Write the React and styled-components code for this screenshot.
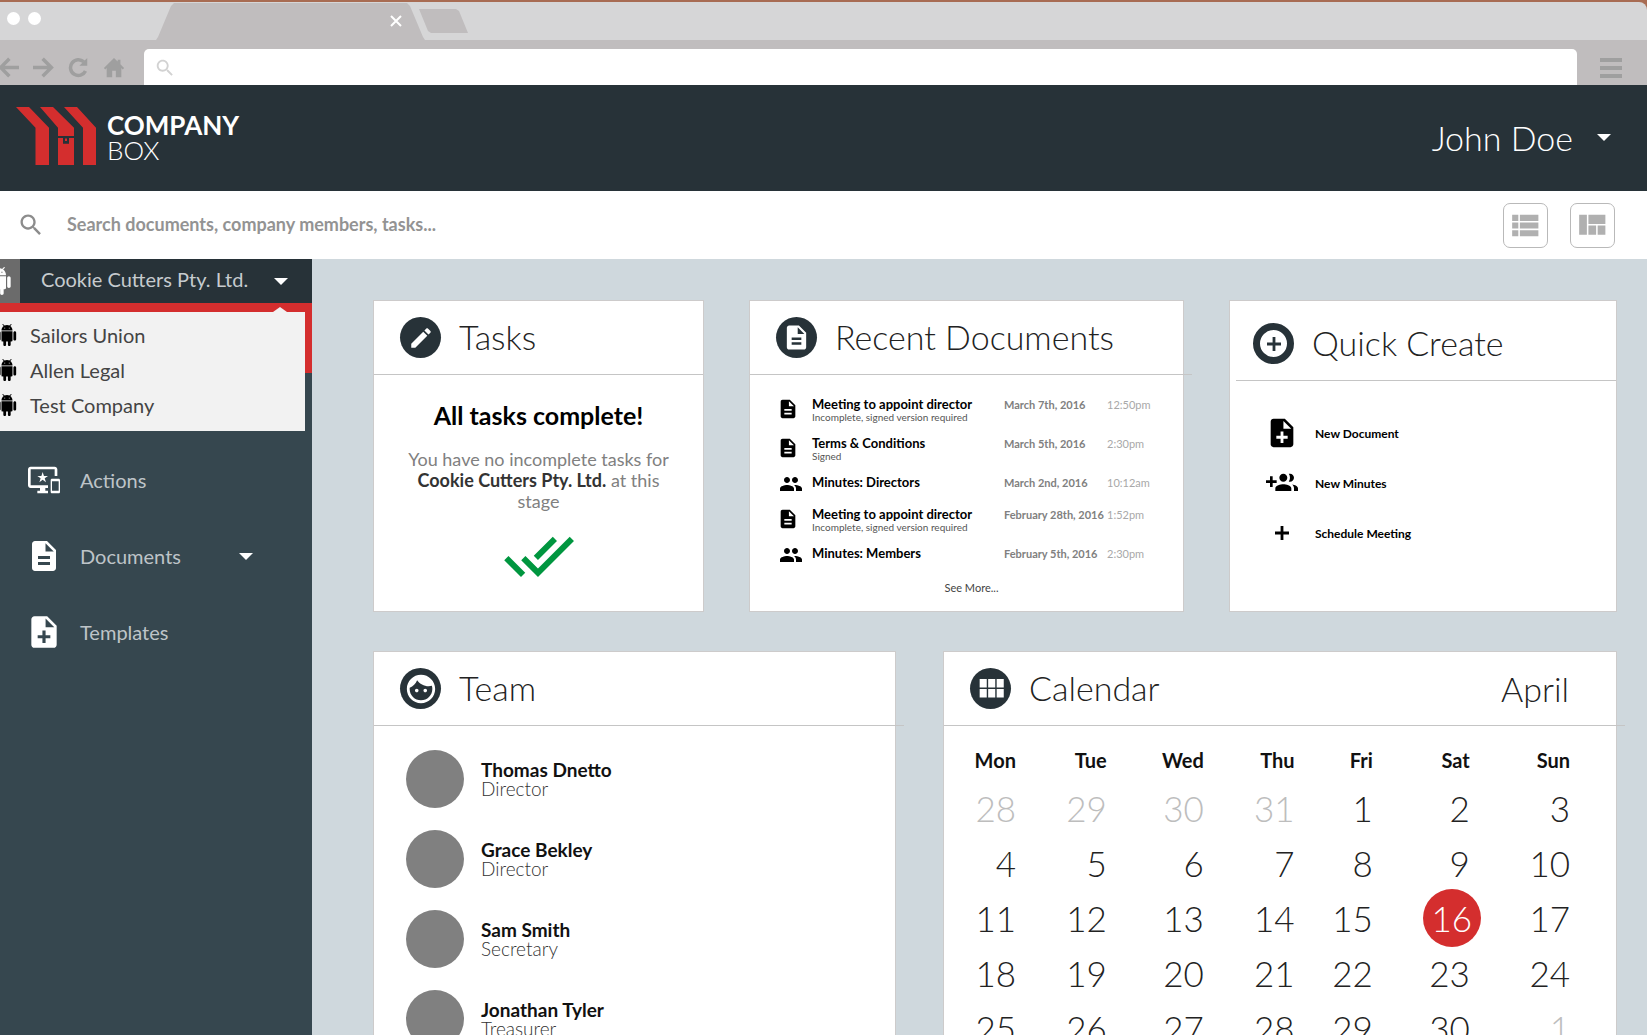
import React from "react";
import styled, { createGlobalStyle, css } from "styled-components";

const GlobalStyle = createGlobalStyle`
  *, *::before, *::after { box-sizing: border-box; }
  html, body { margin: 0; padding: 0; }
  body {
    font-family: Lato, "Liberation Sans", sans-serif;
    background: #a86c53;
    color: #222;
  }
  button, input { font-family: inherit; }
  h1, h2, h3, p, ul { margin: 0; padding: 0; }
  ul { list-style: none; }
`;

/* ---------- icons ---------- */

const paths = {
  search: "M15.5 14h-.79l-.28-.27C15.41 12.59 16 11.11 16 9.5 16 5.91 13.09 3 9.5 3S3 5.91 3 9.5 5.91 16 9.5 16c1.61 0 3.09-.59 4.23-1.57l.27.28v.79l5 4.99L20.49 19l-4.99-5zm-6 0C7.01 14 5 11.99 5 9.5S7.01 5 9.5 5 14 7.01 14 9.5 11.99 14 9.5 14z",
  list: "M4 14h4v-4H4v4zm0 5h4v-4H4v4zM4 9h4V5H4v4zm5 5h12v-4H9v4zm0 5h12v-4H9v4zM9 5v4h12V5H9z",
  quilt: "M10 18h5v-6h-5v6zm-6 0h5V5H4v13zm12 0h5v-6h-5v6zM10 5v6h11V5H10z",
  android: "M6 18c0 .55.45 1 1 1h1v3.5c0 .83.67 1.5 1.5 1.5s1.5-.67 1.5-1.5V19h2v3.5c0 .83.67 1.5 1.5 1.5s1.5-.67 1.5-1.5V19h1c.55 0 1-.45 1-1V8H6v10zM3.5 8C2.67 8 2 8.67 2 9.5v7c0 .83.67 1.5 1.5 1.5S5 17.33 5 16.5v-7C5 8.67 4.33 8 3.5 8zm17 0c-.83 0-1.5.67-1.5 1.5v7c0 .83.67 1.5 1.5 1.5s1.5-.67 1.5-1.5v-7c0-.83-.67-1.5-1.5-1.5zm-4.97-5.84l1.3-1.3c.2-.2.2-.51 0-.71-.2-.2-.51-.2-.71 0l-1.48 1.48C13.85 1.23 12.95 1 12 1c-.96 0-1.86.23-2.66.63L7.85.15c-.2-.2-.51-.2-.71 0-.2.2-.2.51 0 .71l1.31 1.31C6.97 3.26 6 5.01 6 7h12c0-1.99-.97-3.75-2.47-4.84zM10 5H9V4h1v1zm5 0h-1V4h1v1z",
  devices: "M23 11.01L18 11c-.55 0-1 .45-1 1v9c0 .55.45 1 1 1h5c.55 0 1-.45 1-1v-9c0-.55-.45-.99-1-.99zM23 20h-5v-7h5v7zM20 2H2C.89 2 0 2.89 0 4v12c0 1.1.89 2 2 2h7v2H7v2h8v-2h-2v-2h2v-2H2V4h18v5h2V4c0-1.11-.9-2-2-2zm-8.03 7L11 6l-.97 3H7l2.47 1.76-.94 2.91 2.47-1.8 2.47 1.8-.94-2.91L15 9h-3.03z",
  doc: "M14 2H6c-1.1 0-1.99.9-1.99 2L4 20c0 1.1.89 2 1.99 2H18c1.1 0 2-.9 2-2V8l-6-6zm2 16H8v-2h8v2zm0-4H8v-2h8v2zm-3-5V3.5L18.5 9H13z",
  docAdd: "M14 2H6c-1.1 0-1.99.9-1.99 2L4 20c0 1.1.89 2 1.99 2H18c1.1 0 2-.9 2-2V8l-6-6zm2 14h-3v3h-2v-3H8v-2h3v-3h2v3h3v2zm-3-7V3.5L18.5 9H13z",
  people: "M16 11c1.66 0 2.99-1.34 2.99-3S17.66 5 16 5c-1.66 0-3 1.34-3 3s1.34 3 3 3zm-8 0c1.66 0 2.99-1.34 2.99-3S9.66 5 8 5C6.34 5 5 6.34 5 8s1.34 3 3 3zm0 2c-2.33 0-7 1.17-7 3.5V19h14v-2.5c0-2.33-4.67-3.5-7-3.5zm8 0c-.29 0-.62.02-.97.05 1.16.84 1.97 1.97 1.97 3.45V19h6v-2.5c0-2.33-4.67-3.5-7-3.5z",
  groupAdd: "M8 10H5V7H3v3H0v2h3v3h2v-3h3v-2zm10 1c1.66 0 2.99-1.34 2.99-3S19.66 5 18 5c-.32 0-.63.05-.91.14.57.81.9 1.79.9 2.86s-.34 2.04-.9 2.86c.28.09.59.14.91.14zm-5 0c1.66 0 2.99-1.34 2.99-3S14.66 5 13 5c-1.66 0-3 1.34-3 3s1.34 3 3 3zm6.62 2.16c.83.73 1.38 1.66 1.38 2.84v2h3v-2c0-1.54-2.37-2.49-4.38-2.84zM13 13c-2 0-6 1-6 3v2h12v-2c0-2-4-3-6-3z",
  plus: "M19 13.400h-5.600V19h-2.800v-5.600H5v-2.800h5.600V5h2.800v5.600H19z",
  doneAll: "M18 7l-1.41-1.41-6.34 6.34 1.41 1.41L18 7zm4.24-1.41L11.66 16.17 7.48 12l-1.41 1.41L11.66 19l12-12-1.42-1.41zM.41 13.41L6 19l1.41-1.41L1.83 12 .41 13.41z",
  pencil: "M3 17.25V21h3.75L17.81 9.94l-3.75-3.75L3 17.25zM20.71 7.04c.39-.39.39-1.02 0-1.41l-2.34-2.34c-.39-.39-1.02-.39-1.41 0l-1.83 1.83 3.75 3.75 1.83-1.83z",
  face: "M9 11.75c-.69 0-1.25.56-1.25 1.25s.56 1.25 1.25 1.25 1.25-.56 1.25-1.25-.56-1.25-1.25-1.25zm6 0c-.69 0-1.25.56-1.25 1.25s.56 1.25 1.25 1.25 1.25-.56 1.25-1.25-.56-1.25-1.25-1.25zM12 2C6.48 2 2 6.48 2 12s4.48 10 10 10 10-4.48 10-10S17.52 2 12 2zm0 18c-4.41 0-8-3.59-8-8 0-.29.02-.58.05-.86 2.36-1.05 4.23-2.98 5.21-5.37C11.07 8.33 14.05 10 17.42 10c.78 0 1.53-.09 2.25-.26.21.71.33 1.47.33 2.26 0 4.41-3.59 8-8 8z",
  grid: "M4 11h5V5H4v6zm0 7h5v-6H4v6zm6 0h5v-6h-5v6zm6 0h5v-6h-5v6zm-6-7h5V5h-5v6zm6-6v6h5V5h-5z",
  menu: "M1 3h22v4H1zM1 11h22v4H1zM1 19h22v4H1z",
  home: "M12 1L1 12l1.500 1.500L4 12v10h6v-7h4v7h6V12l1.500 1.500L23 12l-4-4V3h-3v2z",
};

const Svg = styled.svg`
  display: block;
  flex: none;
  fill: currentColor;
`;

const Icon = ({ name, size }) => (
  <Svg width={size} height={size} viewBox="0 0 24 24" aria-hidden="true">
    <path d={paths[name]} />
  </Svg>
);

/* the face of the Team badge is dark, cut out of a light disc */
const FaceIcon = ({ size }) => (
  <Svg width={size} height={size} viewBox="0 0 24 24" aria-hidden="true">
    <path d={paths.face} />
  </Svg>
);

const StrokeSvg = styled(Svg)`
  fill: none;
  stroke: currentColor;
  stroke-width: 4;
`;

const Caret = styled.span`
  flex: none;
  border: 7px solid transparent;
  border-top-color: #fff;
  border-bottom-width: 0;
`;

/* ---------- browser window ---------- */

const Window = styled.div`
  display: flex;
  flex-direction: column;
  height: 100vh;
  overflow: hidden;
  border-top: 2px solid #a86c53;
`;

const TabStrip = styled.div`
  flex: none;
  display: flex;
  align-items: flex-end;
  height: 38px;
  background: #d6d6d7;
  border-top-right-radius: 8px;
`;

const WindowDots = styled.div`
  display: flex;
  align-self: center;
  gap: 8px;
  width: 156px;
  padding: 0 0 6px 7px;
`;

const Dot = styled.span`
  width: 13px;
  height: 13px;
  border-radius: 50%;
  background: #fff;
`;

const Tab = styled.div`
  display: flex;
  align-items: center;
  justify-content: flex-end;
  width: 269px;
  height: 37px;
  padding: 0 23px 2px 0;
  background: #c0bdbe;
  clip-path: polygon(18px 0, calc(100% - 18px) 0, calc(100% - 15px) 3px, calc(100% - 2px) 34px, 100% 100%, 0 100%, 2px 34px, 15px 3px);
`;

const PlainButton = styled.button`
  display: flex;
  align-items: center;
  margin: 0;
  padding: 0;
  border: 0;
  background: none;
  color: inherit;
  font-size: inherit;
  cursor: pointer;
`;

const CloseButton = styled(PlainButton)`
  color: #fff;
`;

const NewTab = styled(PlainButton)`
  align-self: center;
  width: 49px;
  height: 24px;
  margin-left: -6px;
  background: #c0bdbe;
  clip-path: polygon(0 0, 37px 0, 40px 2px, 100% 100%, 12px 100%, 9px 22px);
`;

const Toolbar = styled.div`
  flex: none;
  display: flex;
  align-items: flex-end;
  height: 45px;
  padding-right: 24px;
  background: #c0bdbe;
  color: #9f9f9f;
`;

const ToolButtons = styled.div`
  display: flex;
  align-self: center;
  gap: 14px;
  width: 144px;
  padding-top: 10px;
  margin-left: -2px;
`;

const AddressBar = styled.label`
  flex: 1;
  display: flex;
  align-items: center;
  gap: 8px;
  height: 36px;
  padding: 2px 12px 0 10px;
  margin: 0 22px 0 2px;
  border-radius: 5px 5px 0 0;
  background: #fff;
  color: #d2d2d2;
`;

const TextInput = styled.input`
  flex: 1;
  min-width: 0;
  padding: 0 0 2px;
  border: 0;
  outline: 0;
  background: transparent;
  color: #444;
  font-size: 18px;
  &::placeholder { color: #939393; opacity: 1; font-weight: 700; }
`;

const MenuButton = styled(PlainButton)`
  padding-bottom: 6px;
`;

/* ---------- header ---------- */

const Header = styled.header`
  flex: none;
  display: flex;
  align-items: center;
  justify-content: space-between;
  height: 106px;
  padding: 0 36px 4px 16px;
  background: #273238;
  color: #fff;
`;

const Brand = styled.a`
  display: flex;
  align-items: center;
  gap: 11px;
  color: #fff;
  text-decoration: none;
  font-size: 26px;
  line-height: 25px;
`;

const BrandName = styled.span`
  display: flex;
  flex-direction: column;
  padding-top: 3px;
  strong { font-weight: 700; }
  span { font-weight: 300; }
`;

const UserButton = styled(PlainButton)`
  gap: 24px;
  padding-top: 2px;
  font-size: 34px;
  font-weight: 300;
  color: #fff;
`;

const SearchBar = styled.div`
  flex: none;
  display: flex;
  align-items: center;
  gap: 22px;
  height: 68px;
  padding: 0 32px 0 17px;
  background: #fff;
`;

const SearchField = styled.label`
  flex: 1;
  display: flex;
  align-items: center;
  gap: 22px;
  color: #8c8c8c;
`;

const ViewButton = styled.button`
  display: flex;
  align-items: center;
  justify-content: center;
  width: 45px;
  height: 45px;
  padding: 0 2px 0 0;
  border: 1px solid #b9b9b9;
  border-radius: 7px;
  background: #fff;
  color: #b0b0b0;
`;

/* ---------- sidebar ---------- */

const Body = styled.div`
  flex: 1;
  display: flex;
  min-height: 0;
`;

const Sidebar = styled.aside`
  flex: none;
  width: 312px;
  background: #36474f;
`;

const CompanyPicker = styled.div`
  position: relative;
`;

const CompanyButton = styled(PlainButton)`
  width: 100%;
  height: 44px;
  padding-right: 24px;
  background: #273238;
  color: #c6cbce;
  font-size: 20px;
`;

const CompanyName = styled.span`
  flex: 1;
  padding-bottom: 4px;
  text-align: left;
`;

const CompanyBadge = styled.span`
  display: flex;
  align-items: center;
  justify-content: flex-end;
  width: 20px;
  height: 44px;
  margin-right: 21px;
  padding-right: 7px;
  overflow: hidden;
  background: #6b6b6b;
  color: #fff;
`;

const CompanyMenu = styled.ul`
  position: absolute;
  z-index: 1;
  top: 53px;
  left: 0;
  right: 7px;
  padding: 5px 0 9px;
  background: #f2f2f2;
  &::before {
    content: "";
    position: absolute;
    right: 18px;
    bottom: 100%;
    border: 7px solid transparent;
    border-top-width: 0;
    border-bottom: 5px solid #f2f2f2;
  }
`;

const CompanyOption = styled(PlainButton)`
  gap: 12px;
  width: 100%;
  height: 35px;
  margin-left: -4px;
  color: #000;
  font-size: 20px;
  span { color: #444; }
`;

const ActiveSlot = styled.div`
  height: 70px;
  margin-bottom: 69px;
  background: #d42e2e;
`;

const NavLink = styled.a`
  display: flex;
  align-items: center;
  gap: 18px;
  height: 76px;
  padding: 0 59px 0 26px;
  color: #fff;
  text-decoration: none;
  font-size: 20px;
`;

const NavIcon = styled.span`
  display: flex;
  justify-content: center;
  width: 36px;
`;

const NavText = styled.span`
  flex: 1;
  color: #bec4c8;
`;

/* ---------- dashboard ---------- */

const Main = styled.main`
  flex: 1;
  min-width: 0;
  display: flex;
  flex-direction: column;
  gap: 39px;
  padding: 41px 30px 0 61px;
  background: #cfd8dd;
`;

const CardRow = styled.div`
  flex: none;
  display: grid;
  grid-template-columns: ${(p) => p.$columns};
  gap: ${(p) => p.$gap}px;
`;

const Card = styled.section`
  min-width: 0;
  min-height: 312px;
  background: #fff;
  border: 1px solid #cdcbcb;
`;

const CardHeader = styled.div`
  display: flex;
  align-items: center;
  gap: 18px;
  height: ${(p) => (p.$tall ? 79 : 73)}px;
  padding: ${(p) => (p.$tall ? "6px 47px 0 23px" : "0 47px 0 26px")};
`;

const CardTitle = styled.h2`
  flex: 1;
  padding-bottom: 2px;
  font-size: 34px;
  font-weight: 300;
  line-height: 40px;
  white-space: nowrap;
`;

const Month = styled.span`
  font-size: 34px;
  font-weight: 300;
`;

const Disc = styled.span`
  flex: none;
  display: flex;
  align-items: center;
  justify-content: center;
  width: 41px;
  height: 41px;
  border-radius: 50%;
  background: ${(p) => (p.$ring ? "#fff" : "#273238")};
  border: ${(p) => (p.$ring ? "7px solid #273238" : "0")};
  color: ${(p) => (p.$ring ? "#273238" : "#fff")};
`;

const Divider = styled.hr`
  position: relative;
  height: 1px;
  margin: 0 ${(p) => (p.$overhang ? -9 : 0)}px 0 ${(p) => (p.$inset ? 6 : 0)}px;
  border: 0;
  background: #c5c5c5;
`;

const TasksBody = styled.div`
  display: flex;
  flex-direction: column;
  align-items: center;
  padding: 25px 24px 0;
  text-align: center;
`;

const TasksHeading = styled.h3`
  font-size: 25px;
  line-height: 30px;
  color: #000;
`;

const TasksText = styled.p`
  margin: 19px 0 8px;
  font-size: 18px;
  line-height: 21px;
  color: #808080;
  strong { color: #333; }
`;

const Success = styled.span`
  color: #00963f;
`;

const DocTable = styled.table`
  width: 100%;
  margin-top: 22px;
  border-collapse: collapse;
  table-layout: fixed;
  td { padding: 0; vertical-align: top; white-space: nowrap; }
`;

const DocRow = styled.tr`
  height: ${(p) => (p.$short ? 32 : 39)}px;
`;

const IconCell = styled.td`
  width: 62px;
  color: #000;
  ${Svg} { margin: ${(p) => (p.$wide ? "-3px 0 0 29px" : "1px 0 0 27px")}; }
`;

const DocTitle = styled.div`
  font-size: 13px;
  line-height: 15px;
  font-weight: 700;
  color: #000;
`;

const DocNote = styled.div`
  font-size: 10px;
  line-height: 11px;
  color: #555;
`;

const DateCell = styled.td`
  width: 103px;
  font-size: 11px;
  line-height: 15px;
  font-weight: 700;
  color: #808080;
`;

const TimeCell = styled.td`
  width: 76px;
  font-size: 11px;
  line-height: 15px;
  color: #a8a8a8;
`;

const SeeMore = styled.a`
  display: block;
  margin-top: 3px;
  padding-left: 10px;
  text-align: center;
  font-size: 11px;
  line-height: 14px;
  color: #444;
  text-decoration: none;
`;

const QuickList = styled.ul`
  padding: 27px 0 0 35px;
`;

const QuickButton = styled(PlainButton)`
  gap: 16px;
  height: 50px;
  font-size: 12px;
  font-weight: 700;
  color: #000;
`;

const QuickIcon = styled.span`
  display: flex;
  justify-content: center;
  width: 34px;
`;

const TeamList = styled.ul`
  padding: 13px 0 16px 32px;
`;

const Member = styled.li`
  display: flex;
  align-items: center;
  gap: 17px;
  height: 80px;
`;

const Avatar = styled.span`
  width: 58px;
  height: 58px;
  border-radius: 50%;
  background: #808080;
`;

const MemberText = styled.div`
  display: flex;
  flex-direction: column;
  font-size: 19px;
  line-height: 19px;
  strong { color: #111; }
  span { color: #333; font-weight: 300; }
`;

const CalendarTable = styled.table`
  width: calc(100% - 46px);
  margin-top: 14px;
  border-collapse: collapse;
  table-layout: fixed;
  th, td { padding: 0; text-align: right; }
  th { height: 40px; font-size: 20px; color: #111; }
  td { height: 55px; font-size: 35px; line-height: 40px; font-weight: 300; }
`;

const Col = styled.col`
  width: ${(p) => p.$share}%;
`;

const Day = styled.span`
  ${(p) => p.$muted && css`color: #bdbdbd;`}
  ${(p) => p.$today && css`
    display: inline-flex;
    align-items: center;
    justify-content: center;
    width: 58px;
    height: 58px;
    margin: -9px -11px -9px 0;
    border-radius: 50%;
    background: #d42e2e;
    color: #fff;
  `}
`;

const companies = ["Sailors Union", "Allen Legal", "Test Company"];

const documents = [
  { icon: "doc", title: "Meeting to appoint director", note: "Incomplete, signed version required", date: "March 7th, 2016", time: "12:50pm" },
  { icon: "doc", title: "Terms & Conditions", note: "Signed", date: "March 5th, 2016", time: "2:30pm" },
  { icon: "people", title: "Minutes: Directors", date: "March 2nd, 2016", time: "10:12am" },
  { icon: "doc", title: "Meeting to appoint director", note: "Incomplete, signed version required", date: "February 28th, 2016", time: "1:52pm" },
  { icon: "people", title: "Minutes: Members", date: "February 5th, 2016", time: "2:30pm" },
];

const quickActions = [
  { icon: "docAdd", size: 34, label: "New Document" },
  { icon: "groupAdd", size: 32, label: "New Minutes" },
  { icon: "plus", size: 24, label: "Schedule Meeting" },
];

const team = [
  ["Thomas Dnetto", "Director"],
  ["Grace Bekley", "Director"],
  ["Sam Smith", "Secretary"],
  ["Jonathan Tyler", "Treasurer"],
];

const weekdays = ["Mon", "Tue", "Wed", "Thu", "Fri", "Sat", "Sun"];
const columnShares = [11.5, 14.5, 15.5, 14.5, 12.5, 15.5, 16];
const TODAY = 16;
const weeks = [
  [28, 29, 30, 31, 1, 2, 3],
  [4, 5, 6, 7, 8, 9, 10],
  [11, 12, 13, 14, 15, 16, 17],
  [18, 19, 20, 21, 22, 23, 24],
  [25, 26, 27, 28, 29, 30, 1],
];
const isOutside = (week, day) =>
  (week === 0 && day > 7) || (week === weeks.length - 1 && day < 7);

const Logo = () => (
  <Svg width="80" height="58" viewBox="0 0 80 58" aria-hidden="true" color="#d42e2e">
    <path d="M0 0H13L33 20.700V58H19.500V20.700Z" />
    <path d="M24 0H37L58 20.700V29H42V20.700Z" />
    <path d="M42 31H47V36.700H53V31H58V58H42Z" />
    <path d="M49 31.500H51V34H49Z" />
    <path d="M48 0H61L80 20.700V58H67V20.700Z" />
  </Svg>
);

function BrowserChrome() {
  return (
    <>
      <TabStrip>
        <WindowDots><Dot /><Dot /></WindowDots>
        <Tab>
          <CloseButton aria-label="Close tab">
            <StrokeSvg width="12" height="12" viewBox="0 0 24 24"><path d="M2 2L22 22M22 2L2 22" /></StrokeSvg>
          </CloseButton>
        </Tab>
        <NewTab aria-label="New tab" />
      </TabStrip>
      <Toolbar>
        <ToolButtons>
          <PlainButton aria-label="Back">
            <StrokeSvg width="21" height="21" viewBox="0 0 24 24"><path d="M24 12H4M13 2L3 12L13 22" /></StrokeSvg>
          </PlainButton>
          <PlainButton aria-label="Forward">
            <StrokeSvg width="21" height="21" viewBox="0 0 24 24"><path d="M0 12H20M11 2L21 12L11 22" /></StrokeSvg>
          </PlainButton>
          <PlainButton aria-label="Reload">
            <StrokeSvg width="21" height="21" viewBox="0 0 24 24">
              <path d="M20 16A9 9 0 1 1 18 5.500" />
              <path d="M22 1V10H13Z" fill="currentColor" stroke="none" />
            </StrokeSvg>
          </PlainButton>
          <PlainButton aria-label="Home"><Icon name="home" size={22} /></PlainButton>
        </ToolButtons>
        <AddressBar>
          <Icon name="search" size={22} />
          <TextInput type="text" aria-label="Address" />
        </AddressBar>
        <MenuButton aria-label="Menu"><Icon name="menu" size={24} /></MenuButton>
      </Toolbar>
    </>
  );
}

function CompanySwitcher() {
  return (
    <CompanyPicker>
      <CompanyButton aria-expanded="true">
        <CompanyBadge><Icon name="android" size={28} /></CompanyBadge>
        <CompanyName>Cookie Cutters Pty. Ltd.</CompanyName>
        <Caret />
      </CompanyButton>
      <CompanyMenu>
        {companies.map((name) => (
          <li key={name}>
            <CompanyOption><Icon name="android" size={22} /><span>{name}</span></CompanyOption>
          </li>
        ))}
      </CompanyMenu>
    </CompanyPicker>
  );
}

function RecentDocuments() {
  return (
    <Card>
      <CardHeader>
        <Disc><Icon name="doc" size={29} /></Disc>
        <CardTitle>Recent Documents</CardTitle>
      </CardHeader>
      <Divider $overhang />
      <DocTable>
        <tbody>
          {documents.map((d, i) => (
            <DocRow key={i} $short={!d.note}>
              <IconCell $wide={d.icon === "people"}><Icon name={d.icon} size={d.icon === "doc" ? 22 : 24} /></IconCell>
              <td>
                <DocTitle>{d.title}</DocTitle>
                {d.note && <DocNote>{d.note}</DocNote>}
              </td>
              <DateCell>{d.date}</DateCell>
              <TimeCell>{d.time}</TimeCell>
            </DocRow>
          ))}
        </tbody>
      </DocTable>
      <SeeMore href="#documents">See More...</SeeMore>
    </Card>
  );
}

function Calendar() {
  return (
    <Card>
      <CardHeader>
        <Disc><Icon name="grid" size={34} /></Disc>
        <CardTitle>Calendar</CardTitle>
        <Month>April</Month>
      </CardHeader>
      <Divider $overhang />
      <CalendarTable>
        <colgroup>{columnShares.map((s, i) => <Col key={i} $share={s} />)}</colgroup>
        <thead><tr>{weekdays.map((d) => <th key={d} scope="col">{d}</th>)}</tr></thead>
        <tbody>
          {weeks.map((week, w) => (
            <tr key={w}>
              {week.map((day) => (
                <td key={day}><Day $muted={isOutside(w, day)} $today={day === TODAY}>{day}</Day></td>
              ))}
            </tr>
          ))}
        </tbody>
      </CalendarTable>
    </Card>
  );
}

export default function App() {
  return (
    <>
      <GlobalStyle />
      <Window>
        <BrowserChrome />
        <Header>
          <Brand href="#home">
            <Logo />
            <BrandName><strong>COMPANY</strong><span>BOX</span></BrandName>
          </Brand>
          <UserButton>John Doe<Caret /></UserButton>
        </Header>
        <SearchBar>
          <SearchField>
            <Icon name="search" size={28} />
            <TextInput type="search" aria-label="Search" placeholder="Search documents, company members, tasks..." />
          </SearchField>
          <ViewButton aria-label="List view"><Icon name="list" size={37} /></ViewButton>
          <ViewButton aria-label="Tile view"><Icon name="quilt" size={37} /></ViewButton>
        </SearchBar>
        <Body>
          <Sidebar>
            <CompanySwitcher />
            <ActiveSlot />
            <nav>
              <NavLink href="#actions"><NavIcon><Icon name="devices" size={32} /></NavIcon><NavText>Actions</NavText></NavLink>
              <NavLink href="#documents"><NavIcon><Icon name="doc" size={36} /></NavIcon><NavText>Documents</NavText><Caret /></NavLink>
              <NavLink href="#templates"><NavIcon><Icon name="docAdd" size={38} /></NavIcon><NavText>Templates</NavText></NavLink>
            </nav>
          </Sidebar>
          <Main>
            <CardRow $columns="331fr 435fr 388fr" $gap={45}>
              <Card>
                <CardHeader>
                  <Disc><Icon name="pencil" size={26} /></Disc>
                  <CardTitle>Tasks</CardTitle>
                </CardHeader>
                <Divider />
                <TasksBody>
                  <TasksHeading>All tasks complete!</TasksHeading>
                  <TasksText>
                    You have no incomplete tasks for<br /><strong>Cookie Cutters Pty. Ltd.</strong> at this<br />stage
                  </TasksText>
                  <Success><Icon name="doneAll" size={72} /></Success>
                </TasksBody>
              </Card>
              <RecentDocuments />
              <Card>
                <CardHeader $tall>
                  <Disc $ring><Icon name="plus" size={24} /></Disc>
                  <CardTitle>Quick Create</CardTitle>
                </CardHeader>
                <Divider $inset />
                <QuickList>
                  {quickActions.map((a) => (
                    <li key={a.label}>
                      <QuickButton><QuickIcon><Icon name={a.icon} size={a.size} /></QuickIcon>{a.label}</QuickButton>
                    </li>
                  ))}
                </QuickList>
              </Card>
            </CardRow>
            <CardRow $columns="523fr 674fr" $gap={47}>
              <Card>
                <CardHeader>
                  <Disc><FaceIcon size={34} /></Disc>
                  <CardTitle>Team</CardTitle>
                </CardHeader>
                <Divider $overhang />
                <TeamList>
                  {team.map(([name, role]) => (
                    <Member key={name}>
                      <Avatar />
                      <MemberText><strong>{name}</strong><span>{role}</span></MemberText>
                    </Member>
                  ))}
                </TeamList>
              </Card>
              <Calendar />
            </CardRow>
          </Main>
        </Body>
      </Window>
    </>
  );
}
